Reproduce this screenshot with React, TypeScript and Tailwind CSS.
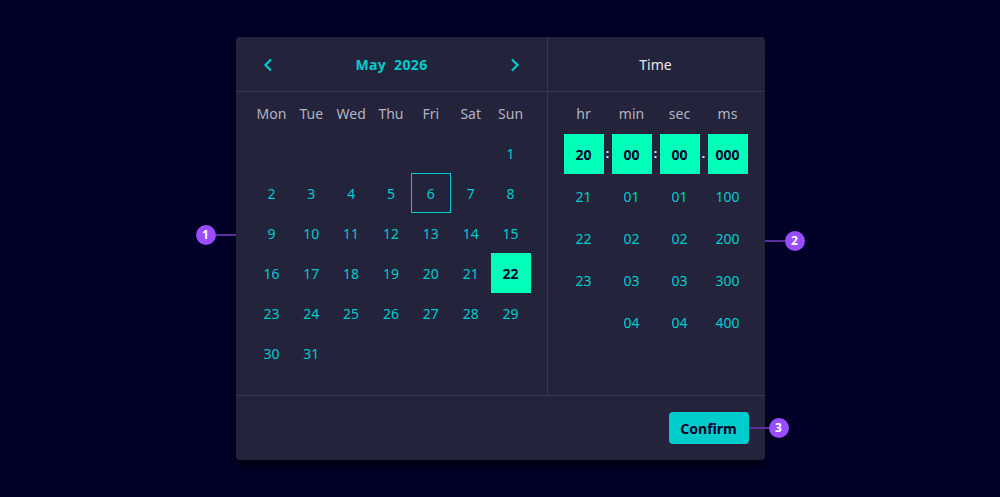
import React from 'react';

const days = ['Mon', 'Tue', 'Wed', 'Thu', 'Fri', 'Sat', 'Sun'];

const cells: (number | null)[] = [
  ...Array(6).fill(null),
  ...Array.from({ length: 31 }, (_, i) => i + 1),
];

const timeCols = [
  { label: 'hr', value: '20', rest: ['21', '22', '23', ''] },
  { label: 'min', value: '00', rest: ['01', '02', '03', '04'] },
  { label: 'sec', value: '00', rest: ['01', '02', '03', '04'] },
  { label: 'ms', value: '000', rest: ['100', '200', '300', '400'] },
];

function Marker({ n }: { n: number }) {
  return (
    <span className="flex h-5 w-5 items-center justify-center rounded-full bg-[#9a4cff] text-[12px] font-bold text-white">
      {n}
    </span>
  );
}

function Chevron({ dir }: { dir: 'left' | 'right' }) {
  return (
    <svg width="14" height="14" viewBox="0 0 14 14" fill="none">
      <path
        d={dir === 'left' ? 'M10 1.5 4.5 7 10 12.5' : 'M4 1.5 9.5 7 4 12.5'}
        stroke="#00cccc"
        strokeWidth="2.2"
      />
    </svg>
  );
}

export default function App() {
  return (
    <div
      className="flex h-[497px] w-[1000px] items-center justify-center bg-[#000028]"
      style={{ fontFamily: '"Noto Sans", "Open Sans", sans-serif' }}
    >
      <div className="relative flex w-[529px] flex-col rounded bg-[#23233c] shadow-[0_6px_12px_rgba(0,0,0,0.55)]">
        <div className="flex">
          {/* calendar */}
          <div className="w-[312px] border-r border-[#37374f]">
            <div className="flex h-[55px] items-center justify-between border-b border-[#37374f] pl-[25px] pr-[24px] pt-px">
              <Chevron dir="left" />
              <span className="text-[14px] font-bold tracking-wide text-[#00cccc]">
                May&nbsp;&nbsp;2026
              </span>
              <Chevron dir="right" />
            </div>
            <div className="px-4 pb-[22px]">
              <div className="grid h-[41px] grid-cols-7 items-center pt-px text-center text-[14px] text-[#b4b4c0]">
                {days.map((d) => (
                  <span key={d}>{d}</span>
                ))}
              </div>
              <div className="grid grid-cols-7">
                {cells.map((c, i) => (
                  <div
                    key={i}
                    className={
                      'flex h-10 items-center justify-center text-[14px] ' +
                      (c === 22
                        ? 'bg-[#00ffb9] font-bold text-[#000028]'
                        : c === 6
                          ? 'border border-[#00cccc] text-[#00cccc]'
                          : 'text-[#00cccc]')
                    }
                  >
                    {c}
                  </div>
                ))}
              </div>
            </div>
          </div>

          {/* time */}
          <div className="w-[216px]">
            <div className="flex h-[55px] items-center justify-center border-b border-[#37374f] pt-px text-[14px] text-[#e8e8ee]">
              Time
            </div>
            <div className="flex gap-2 px-4">
              {timeCols.map((col, ci) => (
                <div key={col.label} className="relative flex w-10 flex-col items-center">
                  <span className="flex h-[42px] items-center pt-px text-[14px] text-[#b4b4c0]">
                    {col.label}
                  </span>
                  <span className="flex h-10 w-10 items-center justify-center bg-[#00ffb9] text-[14px] font-bold text-[#000028]">
                    {col.value}
                  </span>
                  {ci < 3 && (
                    <span className="absolute right-[-7px] top-[42px] flex h-10 w-[6px] items-center justify-center text-[12px] font-bold text-[#e8e8ee]">
                      {ci === 2 ? '.' : ':'}
                    </span>
                  )}
                  {col.rest.map((r, ri) => (
                    <span key={ri} className="flex h-[42px] items-center pt-[2px] text-[14px] text-[#00cccc]">
                      {r}
                    </span>
                  ))}
                </div>
              ))}
            </div>
          </div>
        </div>

        {/* footer */}
        <div className="flex h-[65px] items-center justify-end border-t border-[#37374f] px-4">
          <button className="h-8 w-20 rounded-sm bg-[#00cccc] text-[14px] font-bold text-[#000028]">
            Confirm
          </button>
        </div>

        {/* annotations */}
        <div className="absolute left-[-40px] top-[188px] flex items-center">
          <Marker n={1} />
          <span className="h-[2px] w-5 bg-[#5b2d9e]" />
        </div>
        <div className="absolute right-[-40px] top-[194px] flex items-center">
          <span className="h-[2px] w-5 bg-[#5b2d9e]" />
          <Marker n={2} />
        </div>
        <div className="absolute right-[-24px] top-[381px] flex items-center">
          <span className="h-[2px] w-5 bg-[#5b2d9e]" />
          <Marker n={3} />
        </div>
      </div>
    </div>
  );
}
